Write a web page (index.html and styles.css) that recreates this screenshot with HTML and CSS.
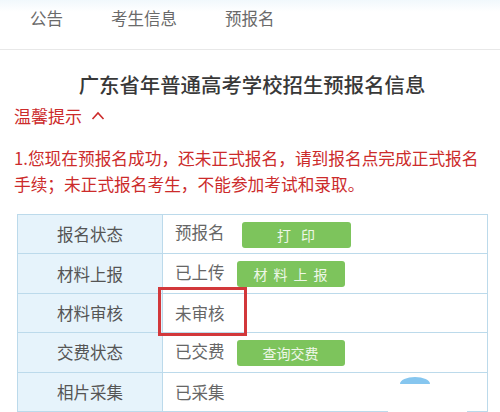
FILE: index.html
```html
<!DOCTYPE html>
<html lang="zh-CN">
<head>
    <meta charset="UTF-8">
    <meta name="viewport" content="width=device-width, initial-scale=1.0">
    <title>预报名信息</title>
    <link rel="stylesheet" href="styles.css">
</head>
<body>
    <nav class="tabs">
        <a class="tab">公告</a>
        <a class="tab">考生信息</a>
        <a class="tab">预报名</a>
    </nav>

    <main class="content">
        <h1 class="title">广东省年普通高考学校招生预报名信息</h1>

        <div class="tip-head">
            温馨提示
            <svg class="caret" width="14" height="9" viewBox="0 0 14 9">
                <path d="M1.5 8 L7 2 L12.5 8" fill="none" stroke="#cc2b2b" stroke-width="1.6"/>
            </svg>
        </div>
        <p class="tip-text">1.您现在预报名成功，还未正式报名，请到报名点完成正式报名手续；未正式报名考生，不能参加考试和录取。</p>

        <table class="status">
            <tr>
                <th>报名状态</th>
                <td>预报名<button class="btn btn-print">打印</button></td>
            </tr>
            <tr>
                <th>材料上报</th>
                <td>已上传<button class="btn btn-upload">材料上报</button></td>
            </tr>
            <tr>
                <th>材料审核</th>
                <td><span class="marked">未审核</span></td>
            </tr>
            <tr>
                <th>交费状态</th>
                <td>已交费<button class="btn">查询交费</button></td>
            </tr>
            <tr>
                <th>相片采集</th>
                <td>已采集</td>
            </tr>
        </table>
    </main>

    <div class="float-btn"></div>
</body>
</html>
```

FILE: styles.css
```css
* {
    margin: 0;
    padding: 0;
    box-sizing: border-box;
}

body {
    font-family: 'Noto Sans CJK SC', 'Noto Sans', sans-serif;
    background: #ffffff;
    color: #555555;
    height: 412px;
    overflow: hidden;
    position: relative;
}

.tabs {
    display: flex;
    gap: 48px;
    height: 50px;
    padding: 9px 0 0 30px;
    background: linear-gradient(#f1f8fc 0, #ffffff 12px);
    border-bottom: 1px solid #e8e8e8;
}

.tab {
    font-size: 16.5px;
    line-height: 18px;
    color: #6a6a6a;
}

.content {
    padding: 0 10px 0 14px;
}

.title {
    margin-top: 20px;
    font-size: 20.4px;
    line-height: 28px;
    font-weight: 500;
    color: #383838;
    text-align: center;
}

.tip-head {
    display: flex;
    align-items: center;
    gap: 9px;
    margin-top: 6px;
    font-size: 17px;
    line-height: 24px;
    color: #cc2b2b;
}

.caret {
    margin-top: -2px;
}

.tip-text {
    margin-top: 17px;
    font-size: 16.7px;
    line-height: 26px;
    color: #cc2b2b;
}

.status {
    margin: 17px 0 0 3px;
    width: 471px;
    border-collapse: collapse;
    font-size: 16.5px;
}

.status th,
.status td {
    height: 39.4px;
    border: 1px solid #bcdaeb;
}

.status th {
    width: 145px;
    font-weight: 400;
    background: #e6f3fb;
    color: #555555;
}

.status td {
    padding-left: 12px;
    color: #666666;
}

.btn {
    margin-left: 12px;
    width: 108px;
    height: 26px;
    border: none;
    border-radius: 3px;
    background: #7dc45c;
    color: #eef7e8;
    font-family: inherit;
    font-size: 14px;
    vertical-align: middle;
}

.btn-print {
    margin-left: 17px;
    width: 109px;
    letter-spacing: 10px;
    text-indent: 10px;
}

.btn-upload {
    letter-spacing: 6px;
    text-indent: 6px;
}

.marked {
    position: relative;
    display: inline-block;
}

.marked::after {
    content: "";
    position: absolute;
    left: -17px;
    top: -14px;
    width: 83px;
    height: 43px;
    border: 3px solid #d2383b;
}

.float-btn {
    position: absolute;
    left: 388px;
    top: 376px;
    width: 79px;
    height: 40px;
    background: #ffffff;
}

.float-btn::before {
    content: "";
    position: absolute;
    left: 12px;
    top: 1px;
    width: 30px;
    height: 7px;
    border-radius: 15px 15px 0 0 / 7px 7px 0 0;
    background: #86c6ef;
}
```
